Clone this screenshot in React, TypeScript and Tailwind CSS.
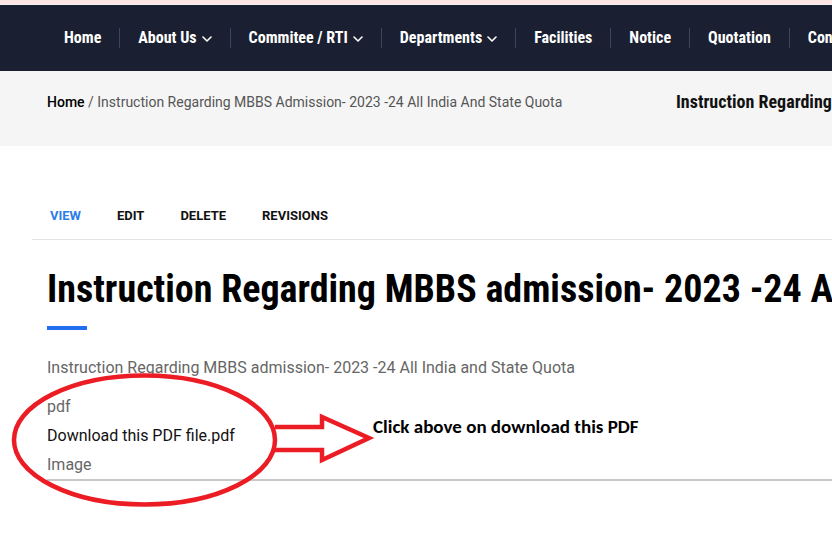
const cond = { fontFamily: "'Roboto Condensed', Roboto, sans-serif", fontStretch: "condensed" } as const;

const navItems = [
  { label: "Home", drop: false },
  { label: "About Us", drop: true },
  { label: "Commitee / RTI", drop: true },
  { label: "Departments", drop: true },
  { label: "Facilities", drop: false },
  { label: "Notice", drop: false },
  { label: "Quotation", drop: false },
  { label: "Contact Us", drop: false },
];

const tabs = ["View", "Edit", "Delete", "Revisions"];

function Caret() {
  return (
    <svg width="10" height="6" viewBox="0 0 10 6" fill="none" className="mt-[1px]">
      <path d="M1 1l4 4 4-4" stroke="currentColor" strokeWidth="1.6" strokeLinecap="round" strokeLinejoin="round" />
    </svg>
  );
}

export default function App() {
  return (
    <div className="relative h-[537px] w-[832px] overflow-hidden bg-white" style={{ fontFamily: "Roboto, sans-serif" }}>
      <div className="h-[4px] bg-[#fde6e6]" />
      <div className="h-[1px] bg-[#f7f0f0]" />

      {/* main nav */}
      <nav className="flex h-[66px] items-center bg-[#1a1f31] pl-[46px]">
        {navItems.map((item, i) => (
          <div
            key={item.label}
            className={
              "flex shrink-0 items-center gap-[5px] whitespace-nowrap px-[18px] text-[16px] font-bold leading-[20px] text-white " +
              (i > 0 ? "border-l border-[#3f4458]" : "")
            }
            style={cond}
          >
            {item.label}
            {item.drop && <Caret />}
          </div>
        ))}
      </nav>

      {/* breadcrumb band */}
      <div className="flex h-[75px] items-start bg-[#f5f5f5] pl-[47px] pt-[22px]">
        <div className="w-[629px] shrink-0 whitespace-nowrap text-[14px] leading-[18px] text-[#555]">
          <span className="font-medium text-black">Home</span> / Instruction Regarding MBBS Admission- 2023 -24 All India And State Quota
        </div>
        <div className="-mt-[1px] shrink-0 whitespace-nowrap text-[18px] font-bold leading-[20px] text-[#111]" style={cond}>
          Instruction Regarding MBBS Admission- 2023 -24 All India And State Quota
        </div>
      </div>

      {/* tabs */}
      <div className="ml-[32px] mt-[62px] flex border-b border-[#e3e3e3] pb-[15px]">
        {tabs.map((t, i) => (
          <div
            key={t}
            className={
              "px-[18px] text-[13px] font-bold uppercase leading-[16px] " +
              (i === 0 ? "text-[#2b7de9]" : "text-[#111]")
            }
          >
            {t}
          </div>
        ))}
      </div>

      {/* content */}
      <div className="pl-[47px]">
        <h1 className="mt-[26px] whitespace-nowrap text-[38px] font-bold leading-[46px] text-black" style={cond}>
          Instruction Regarding MBBS admission- 2023 -24 All India And State Quota
        </h1>
        <div className="mt-[14px] h-[4px] w-[40px] bg-[#1f6fef]" />
        <p className="mt-[28px] whitespace-nowrap text-[16px] leading-[20px] text-[#666]">
          Instruction Regarding MBBS admission- 2023 -24 All India and State Quota
        </p>
        <div className="mt-[14px] flex flex-col text-[16px] leading-[29px]">
          <span className="text-[#666]">pdf</span>
          <span className="text-[#111]">Download this PDF file.pdf</span>
          <span className="text-[#666]">Image</span>
        </div>
        <div className="h-[2px] bg-[#c8c8c8]" />
      </div>

      {/* red annotation over the page */}
      <svg className="pointer-events-none absolute left-0 top-0" width="832" height="537">
        <ellipse cx="144.5" cy="440" rx="130.5" ry="64.5" fill="none" stroke="#ec1c24" strokeWidth="4.5" />
        <polyline
          points="275,427 322,427 322,417 369,438 322,460 322,450 275,450"
          fill="none"
          stroke="#ec1c24"
          strokeWidth="4.5"
          strokeLinejoin="miter"
        />
      </svg>
      <div
        className="absolute left-[373px] top-[416px] whitespace-nowrap text-[19px] font-bold leading-[22px] text-black"
        style={{ fontFamily: "Carlito, Calibri, Lato, sans-serif" }}
      >
        Click above on download this PDF
      </div>
    </div>
  );
}
